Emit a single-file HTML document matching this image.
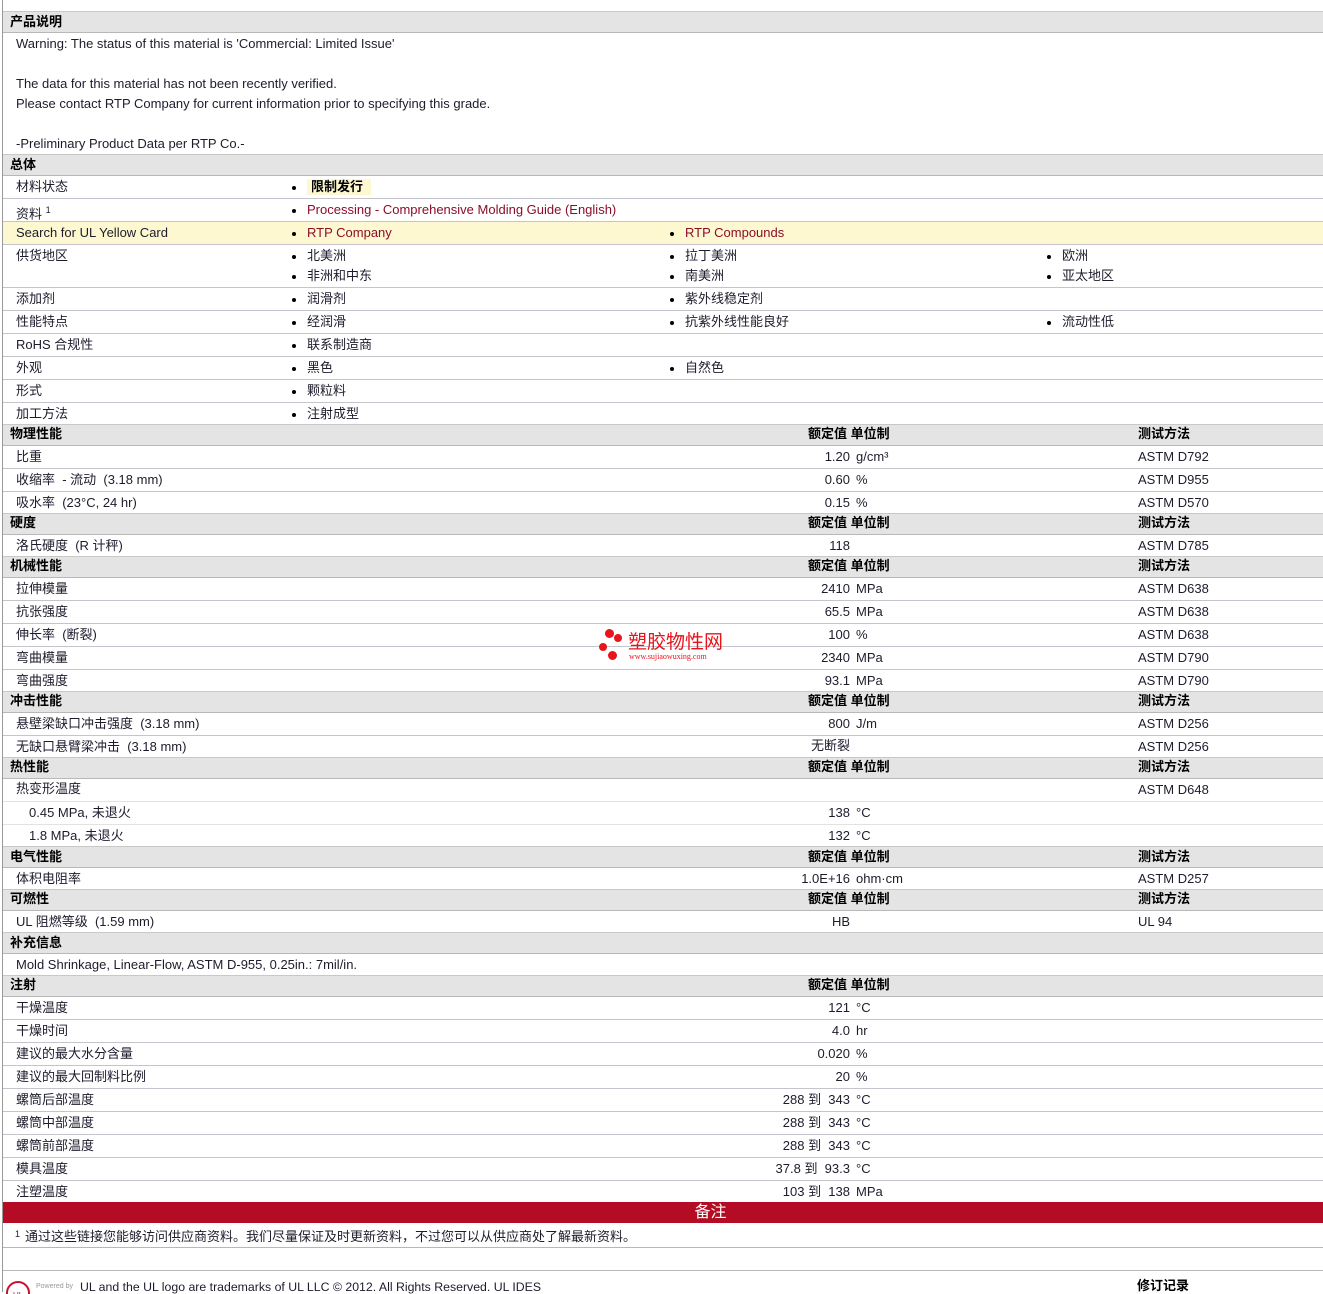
<!DOCTYPE html>
<html><head><meta charset="utf-8"><style>
*{margin:0;padding:0;box-sizing:border-box}
body{width:1323px;height:1292px;background:#fff;position:relative;overflow:hidden;font-family:"Liberation Sans","Noto Sans CJK SC",sans-serif;font-size:13px;color:#1c1c2c}
.vl{position:absolute;left:2px;top:0;width:1px;height:1292px;background:#999}
.r{position:absolute;left:3px;width:1320px;border-bottom:1px solid #c4c4cc}
.h{position:absolute;left:3px;width:1320px;background:#e4e4e4;border-bottom:1px solid #b8b8b8;border-top:1px solid #c8c8c8}
.t{position:absolute;white-space:nowrap;line-height:14px}
.b{font-weight:bold;color:#000}
.v{position:absolute;white-space:nowrap;line-height:14px;right:473px;text-align:right}
.red{color:#8b0d2a}
.dot{position:absolute;width:4px;height:4px;border-radius:2px;background:#000}
</style></head><body>
<div class="vl"></div>
<div class="h" style="top:11px;height:22px"></div><div class="t b" style="left:10px;top:15px">产品说明</div>
<div class="t" style="left:16px;top:37px">Warning: The status of this material is 'Commercial: Limited Issue'</div>
<div class="t" style="left:16px;top:77px">The data for this material has not been recently verified.</div>
<div class="t" style="left:16px;top:97px">Please contact RTP Company for current information prior to specifying this grade.</div>
<div class="t" style="left:16px;top:137px">-Preliminary Product Data per RTP Co.-</div>
<div class="h" style="top:154px;height:22px"></div><div class="t b" style="left:10px;top:158px">总体</div>

<div class="r" style="top:176px;height:23px"></div>
<div class="t" style="left:16px;top:180px">材料状态</div><div class="dot" style="left:292px;top:186px"></div>
<div style="position:absolute;left:307px;top:179px;width:64px;height:16px;background:#fdf8d0"></div><div class="t b" style="left:311px;top:180px">限制发行</div>
<div class="r" style="top:199px;height:23px"></div>
<div class="t" style="left:16px;top:203px">资料 <sup style="font-size:9px">1</sup></div><div class="dot" style="left:292px;top:209px"></div><div class="t red" style="left:307px;top:203px">Processing - Comprehensive Molding Guide (English)</div>
<div class="r" style="top:222px;height:23px;background:#fdf8d0"></div>
<div class="t" style="left:16px;top:226px">Search for UL Yellow Card</div><div class="dot" style="left:292px;top:232px"></div><div class="t red" style="left:307px;top:226px">RTP Company</div><div class="dot" style="left:670px;top:232px"></div><div class="t red" style="left:685px;top:226px">RTP Compounds</div>
<div class="r" style="top:245px;height:43px"></div>
<div class="t" style="left:16px;top:249px">供货地区</div>
<div class="dot" style="left:292px;top:255px"></div><div class="t" style="left:307px;top:249px">北美洲</div>
<div class="dot" style="left:670px;top:255px"></div><div class="t" style="left:685px;top:249px">拉丁美洲</div>
<div class="dot" style="left:1047px;top:255px"></div><div class="t" style="left:1062px;top:249px">欧洲</div>
<div class="dot" style="left:292px;top:275px"></div><div class="t" style="left:307px;top:269px">非洲和中东</div>
<div class="dot" style="left:670px;top:275px"></div><div class="t" style="left:685px;top:269px">南美洲</div>
<div class="dot" style="left:1047px;top:275px"></div><div class="t" style="left:1062px;top:269px">亚太地区</div>
<div class="r" style="top:288px;height:23px"></div>
<div class="t" style="left:16px;top:292px">添加剂</div><div class="dot" style="left:292px;top:298px"></div><div class="t" style="left:307px;top:292px">润滑剂</div><div class="dot" style="left:670px;top:298px"></div><div class="t" style="left:685px;top:292px">紫外线稳定剂</div>
<div class="r" style="top:311px;height:23px"></div>
<div class="t" style="left:16px;top:315px">性能特点</div><div class="dot" style="left:292px;top:321px"></div><div class="t" style="left:307px;top:315px">经润滑</div><div class="dot" style="left:670px;top:321px"></div><div class="t" style="left:685px;top:315px">抗紫外线性能良好</div><div class="dot" style="left:1047px;top:321px"></div><div class="t" style="left:1062px;top:315px">流动性低</div>
<div class="r" style="top:334px;height:23px"></div>
<div class="t" style="left:16px;top:338px">RoHS 合规性</div><div class="dot" style="left:292px;top:344px"></div><div class="t" style="left:307px;top:338px">联系制造商</div>
<div class="r" style="top:357px;height:23px"></div>
<div class="t" style="left:16px;top:361px">外观</div><div class="dot" style="left:292px;top:367px"></div><div class="t" style="left:307px;top:361px">黑色</div><div class="dot" style="left:670px;top:367px"></div><div class="t" style="left:685px;top:361px">自然色</div>
<div class="r" style="top:380px;height:23px"></div>
<div class="t" style="left:16px;top:384px">形式</div><div class="dot" style="left:292px;top:390px"></div><div class="t" style="left:307px;top:384px">颗粒料</div>
<div class="r" style="top:403px;height:22px"></div>
<div class="t" style="left:16px;top:407px">加工方法</div><div class="dot" style="left:292px;top:413px"></div><div class="t" style="left:307px;top:407px">注射成型</div>

<div class="h" style="top:424px;height:22px"></div><div class="t b" style="left:10px;top:427px">物理性能</div><div class="t b" style="left:808px;top:427px">额定值 单位制</div><div class="t b" style="left:1138px;top:427px">测试方法</div>
<div class="r" style="top:446px;height:23px"></div><div class="t" style="left:16px;top:450px">比重</div><div class="v" style="top:450px">1.20</div><div class="t" style="left:856px;top:450px">g/cm³</div><div class="t" style="left:1138px;top:450px">ASTM D792</div>
<div class="r" style="top:469px;height:23px"></div><div class="t" style="left:16px;top:473px">收缩率 &nbsp;- 流动 &nbsp;(3.18 mm)</div><div class="v" style="top:473px">0.60</div><div class="t" style="left:856px;top:473px">%</div><div class="t" style="left:1138px;top:473px">ASTM D955</div>
<div class="r" style="top:492px;height:22px"></div><div class="t" style="left:16px;top:496px">吸水率 &nbsp;(23°C, 24 hr)</div><div class="v" style="top:496px">0.15</div><div class="t" style="left:856px;top:496px">%</div><div class="t" style="left:1138px;top:496px">ASTM D570</div>

<div class="h" style="top:513px;height:22px"></div><div class="t b" style="left:10px;top:516px">硬度</div><div class="t b" style="left:808px;top:516px">额定值 单位制</div><div class="t b" style="left:1138px;top:516px">测试方法</div>
<div class="r" style="top:535px;height:22px"></div><div class="t" style="left:16px;top:539px">洛氏硬度 &nbsp;(R 计秤)</div><div class="v" style="top:539px">118</div><div class="t" style="left:1138px;top:539px">ASTM D785</div>

<div class="h" style="top:556px;height:22px"></div><div class="t b" style="left:10px;top:559px">机械性能</div><div class="t b" style="left:808px;top:559px">额定值 单位制</div><div class="t b" style="left:1138px;top:559px">测试方法</div>
<div class="r" style="top:578px;height:23px"></div><div class="t" style="left:16px;top:582px">拉伸模量</div><div class="v" style="top:582px">2410</div><div class="t" style="left:856px;top:582px">MPa</div><div class="t" style="left:1138px;top:582px">ASTM D638</div>
<div class="r" style="top:601px;height:23px"></div><div class="t" style="left:16px;top:605px">抗张强度</div><div class="v" style="top:605px">65.5</div><div class="t" style="left:856px;top:605px">MPa</div><div class="t" style="left:1138px;top:605px">ASTM D638</div>
<div class="r" style="top:624px;height:23px"></div><div class="t" style="left:16px;top:628px">伸长率 &nbsp;(断裂)</div><div class="v" style="top:628px">100</div><div class="t" style="left:856px;top:628px">%</div><div class="t" style="left:1138px;top:628px">ASTM D638</div>
<div class="r" style="top:647px;height:23px"></div><div class="t" style="left:16px;top:651px">弯曲模量</div><div class="v" style="top:651px">2340</div><div class="t" style="left:856px;top:651px">MPa</div><div class="t" style="left:1138px;top:651px">ASTM D790</div>
<div class="r" style="top:670px;height:22px"></div><div class="t" style="left:16px;top:674px">弯曲强度</div><div class="v" style="top:674px">93.1</div><div class="t" style="left:856px;top:674px">MPa</div><div class="t" style="left:1138px;top:674px">ASTM D790</div>

<div class="h" style="top:691px;height:22px"></div><div class="t b" style="left:10px;top:694px">冲击性能</div><div class="t b" style="left:808px;top:694px">额定值 单位制</div><div class="t b" style="left:1138px;top:694px">测试方法</div>
<div class="r" style="top:713px;height:23px"></div><div class="t" style="left:16px;top:717px">悬壁梁缺口冲击强度 &nbsp;(3.18 mm)</div><div class="v" style="top:717px">800</div><div class="t" style="left:856px;top:717px">J/m</div><div class="t" style="left:1138px;top:717px">ASTM D256</div>
<div class="r" style="top:736px;height:22px"></div><div class="t" style="left:16px;top:740px">无缺口悬臂梁冲击 &nbsp;(3.18 mm)</div><div class="v" style="top:739px">无断裂</div><div class="t" style="left:1138px;top:740px">ASTM D256</div>

<div class="h" style="top:757px;height:22px"></div><div class="t b" style="left:10px;top:760px">热性能</div><div class="t b" style="left:808px;top:760px">额定值 单位制</div><div class="t b" style="left:1138px;top:760px">测试方法</div>
<div class="r" style="top:779px;height:23px;border-color:#e2e2e2"></div><div class="t" style="left:16px;top:782px">热变形温度</div><div class="t" style="left:1138px;top:783px">ASTM D648</div>
<div class="r" style="top:802px;height:23px;border-color:#e2e2e2"></div><div class="t" style="left:29px;top:806px">0.45 MPa, 未退火</div><div class="v" style="top:806px">138</div><div class="t" style="left:856px;top:806px">°C</div>
<div class="r" style="top:825px;height:22px"></div><div class="t" style="left:29px;top:829px">1.8 MPa, 未退火</div><div class="v" style="top:829px">132</div><div class="t" style="left:856px;top:829px">°C</div>

<div class="h" style="top:846px;height:22px"></div><div class="t b" style="left:10px;top:850px">电气性能</div><div class="t b" style="left:808px;top:850px">额定值 单位制</div><div class="t b" style="left:1138px;top:850px">测试方法</div>
<div class="r" style="top:868px;height:22px"></div><div class="t" style="left:16px;top:872px">体积电阻率</div><div class="v" style="top:872px">1.0E+16</div><div class="t" style="left:856px;top:872px">ohm·cm</div><div class="t" style="left:1138px;top:872px">ASTM D257</div>

<div class="h" style="top:889px;height:22px"></div><div class="t b" style="left:10px;top:892px">可燃性</div><div class="t b" style="left:808px;top:892px">额定值 单位制</div><div class="t b" style="left:1138px;top:892px">测试方法</div>
<div class="r" style="top:911px;height:22px"></div><div class="t" style="left:16px;top:915px">UL 阻燃等级 &nbsp;(1.59 mm)</div><div class="v" style="top:915px">HB</div><div class="t" style="left:1138px;top:915px">UL 94</div>

<div class="h" style="top:932px;height:22px"></div><div class="t b" style="left:10px;top:936px">补充信息</div>
<div class="r" style="top:954px;height:22px"></div><div class="t" style="left:16px;top:958px">Mold Shrinkage, Linear-Flow, ASTM D-955, 0.25in.: 7mil/in.</div>

<div class="h" style="top:975px;height:22px"></div><div class="t b" style="left:10px;top:978px">注射</div><div class="t b" style="left:808px;top:978px">额定值 单位制</div>
<div class="r" style="top:997px;height:23px"></div><div class="t" style="left:16px;top:1001px">干燥温度</div><div class="v" style="top:1001px">121</div><div class="t" style="left:856px;top:1001px">°C</div>
<div class="r" style="top:1020px;height:23px"></div><div class="t" style="left:16px;top:1024px">干燥时间</div><div class="v" style="top:1024px">4.0</div><div class="t" style="left:856px;top:1024px">hr</div>
<div class="r" style="top:1043px;height:23px"></div><div class="t" style="left:16px;top:1047px">建议的最大水分含量</div><div class="v" style="top:1047px">0.020</div><div class="t" style="left:856px;top:1047px">%</div>
<div class="r" style="top:1066px;height:23px"></div><div class="t" style="left:16px;top:1070px">建议的最大回制料比例</div><div class="v" style="top:1070px">20</div><div class="t" style="left:856px;top:1070px">%</div>
<div class="r" style="top:1089px;height:23px"></div><div class="t" style="left:16px;top:1093px">螺筒后部温度</div><div class="v" style="top:1093px">288 到 &nbsp;343</div><div class="t" style="left:856px;top:1093px">°C</div>
<div class="r" style="top:1112px;height:23px"></div><div class="t" style="left:16px;top:1116px">螺筒中部温度</div><div class="v" style="top:1116px">288 到 &nbsp;343</div><div class="t" style="left:856px;top:1116px">°C</div>
<div class="r" style="top:1135px;height:23px"></div><div class="t" style="left:16px;top:1139px">螺筒前部温度</div><div class="v" style="top:1139px">288 到 &nbsp;343</div><div class="t" style="left:856px;top:1139px">°C</div>
<div class="r" style="top:1158px;height:23px"></div><div class="t" style="left:16px;top:1162px">模具温度</div><div class="v" style="top:1162px">37.8 到 &nbsp;93.3</div><div class="t" style="left:856px;top:1162px">°C</div>
<div class="t" style="left:16px;top:1185px">注塑温度</div><div class="v" style="top:1185px">103 到 &nbsp;138</div><div class="t" style="left:856px;top:1185px">MPa</div>

<div style="position:absolute;left:3px;top:1202px;width:1320px;height:21px;background:#b30c24;color:#fff;text-align:center;font-size:16px;line-height:21px;padding-left:95px">备注</div>
<div class="r" style="top:1223px;height:25px;border-color:#b8b8b8"></div>
<div class="t" style="left:15px;top:1227px;font-size:9px">1</div><div class="t" style="left:25px;top:1230px;font-size:13px">通过这些链接您能够访问供应商资料。我们尽量保证及时更新资料，不过您可以从供应商处了解最新资料。</div>
<div class="r" style="top:1248px;height:23px;border-color:#b8b8b8"></div>
<svg style="position:absolute;left:5px;top:1280px" width="28" height="14"><circle cx="13" cy="13" r="11" fill="none" stroke="#c8102e" stroke-width="2"/><text x="8" y="18" font-size="8" fill="#c8102e" font-family="Liberation Sans">UL</text></svg>
<div class="t" style="left:36px;top:1280px;font-size:7px;color:#999">Powered by</div>
<div class="t" style="left:80px;top:1280px;font-size:12.3px">UL and the UL logo are trademarks of UL LLC © 2012. All Rights Reserved. UL IDES</div>
<div class="t b" style="left:1137px;top:1279px">修订记录</div>

<div style="position:absolute;left:605px;top:629px;width:9px;height:9px;border-radius:5px;background:#e8141c"></div>
<div style="position:absolute;left:614px;top:634px;width:8px;height:8px;border-radius:4px;background:#e8141c"></div>
<div style="position:absolute;left:599px;top:643px;width:8px;height:8px;border-radius:4px;background:#e8141c"></div>
<div style="position:absolute;left:608px;top:651px;width:9px;height:9px;border-radius:5px;background:#e8141c"></div>
<div class="t" style="left:628px;top:633px;font-size:19px;line-height:19px;color:#e8141c">塑胶物性网</div>
<div class="t" style="left:629px;top:652px;font-size:8px;line-height:9px;color:#e8141c;font-family:'Liberation Serif',serif">www.sujiaowuxing.com</div>
</body></html>
